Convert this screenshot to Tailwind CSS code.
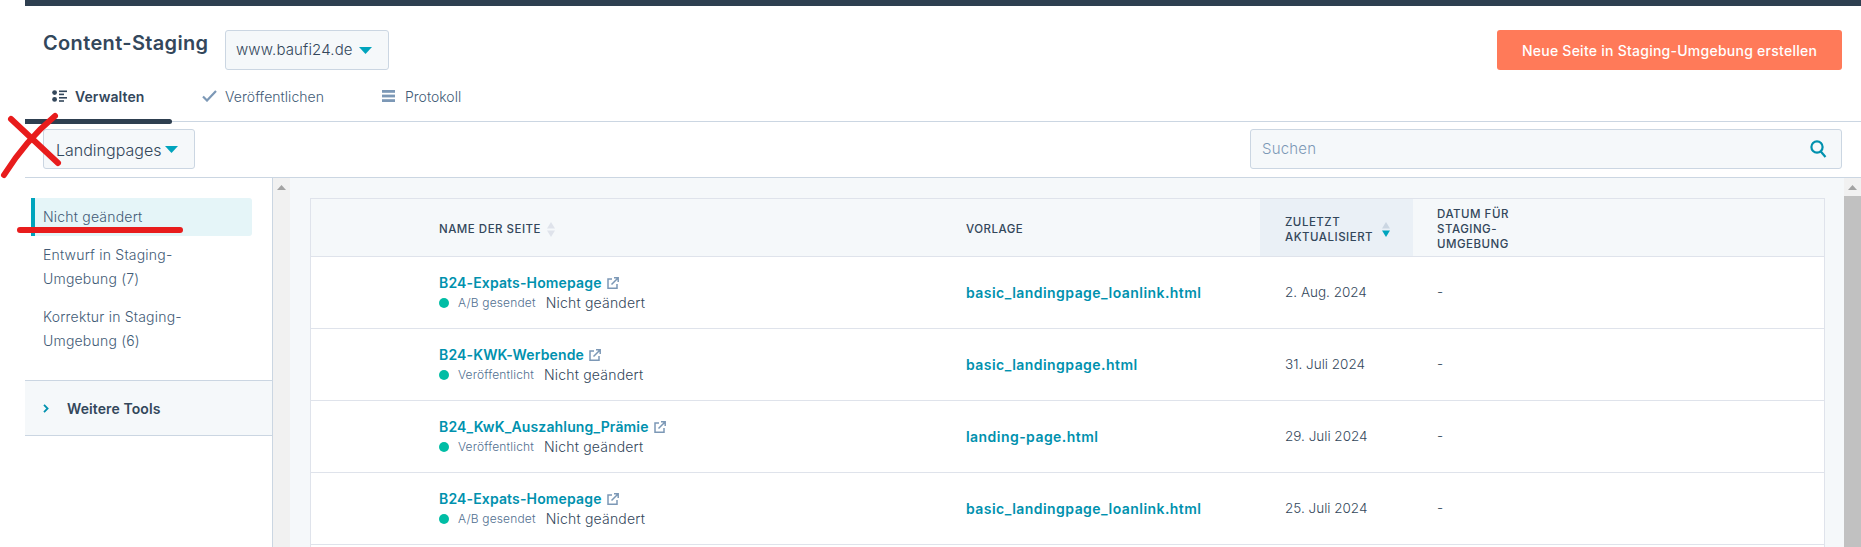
<!DOCTYPE html>
<html>
<head>
  <title>Content-Staging</title>
  <script src="https://cdn.jsdelivr.net/npm/@tailwindcss/browser@4"></script>
</head>
<body class="bg-white overflow-hidden font-['Inter',sans-serif] text-[#33475b]">
  <div class="relative h-[547px] w-[1861px] overflow-hidden">
    <div class="ml-[25px] h-[547px] flex flex-col">
      <div class="h-[6px] bg-[#2e3f50] shrink-0"></div>

      <!-- header -->
      <div class="h-[116px] shrink-0 relative border-b border-[#cbd6e2] pl-[18px] pr-[19px]">
        <div class="flex items-start pt-[24px]">
          <h1 class="text-[20px] leading-[26px] font-semibold tracking-[0.35px] w-[182px]">Content-Staging</h1>
          <button class="h-[40px] w-[164px] flex items-center pl-[10px] gap-[6px] bg-[#f5f8fa] border border-[#cbd6e2] rounded-[3px] text-[15px] font-light tracking-[0.15px]">
            www.baufi24.de
            <svg width="13" height="7" viewBox="0 0 13 7"><path d="M0 0h13L6.500 7z" fill="#00a4bd"/></svg>
          </button>
          <button class="ml-auto h-[40px] w-[345px] bg-[#ff7a59] rounded-[3px] text-white text-[14px] font-medium tracking-[0.25px]">Neue Seite in Staging-Umgebung erstellen</button>
        </div>
        <div class="flex items-center h-[20px] mt-[16px] text-[14px] font-light">
          <svg class="ml-[9px]" width="15" height="12" viewBox="0 0 15 12" fill="#33475b"><circle cx="2.600" cy="2.600" r="2.400"/><circle cx="2.600" cy="9.400" r="2.400"/><rect x="7" y="0.500" width="8" height="1.600"/><rect x="7" y="3.600" width="5" height="1.600"/><rect x="7" y="7" width="8" height="1.600"/><rect x="7" y="10.200" width="5" height="1.600"/></svg>
          <span class="ml-[8px] w-[127px] font-semibold tracking-[0.1px]">Verwalten</span>
          <svg width="15" height="12" viewBox="0 0 15 12"><path d="M1 6.500l4 4L14 1" fill="none" stroke="#7c98b6" stroke-width="2.200"/></svg>
          <span class="ml-[8px] w-[157px] text-[#425b76] tracking-[0.05px]">Veröffentlichen</span>
          <svg width="13" height="12" viewBox="0 0 13 12" fill="#7c98b6"><rect width="13" height="2.800"/><rect y="4.600" width="13" height="2.800"/><rect y="9.200" width="13" height="2.800"/></svg>
          <span class="ml-[10px] text-[#425b76]">Protokoll</span>
        </div>
        <div class="absolute left-0 bottom-[-3px] h-[5px] w-[147px] bg-[#2e3f50] rounded-r-[3px]"></div>
      </div>

      <!-- filter row -->
      <div class="h-[56px] shrink-0 flex items-start pt-[7px] pl-[18px] pr-[19px] border-b border-[#cbd6e2]">
        <button class="h-[40px] w-[152px] flex items-center pl-[12px] pt-px gap-[4px] bg-[#f5f8fa] border border-[#cbd6e2] rounded-[3px] text-[16px] font-light">
          Landingpages
          <svg width="13" height="7" viewBox="0 0 13 7"><path d="M0 0h13L6.500 7z" fill="#00a4bd"/></svg>
        </button>
        <div class="ml-auto h-[40px] w-[592px] flex items-center justify-between pl-[11px] pr-[14px] bg-[#f5f8fa] border border-[#cbd6e2] rounded-[3px]">
          <span class="text-[15px] pt-px font-light text-[#7c98b6] tracking-[0.2px]">Suchen</span>
          <svg width="17" height="18" viewBox="0 0 17 18" fill="none" stroke="#0091ae" stroke-width="2.200"><circle cx="7" cy="7" r="5.600"/><path d="M10.800 11.500l4.700 5.500"/></svg>
        </div>
      </div>

      <!-- body -->
      <div class="flex flex-1 min-h-0">
        <aside class="w-[248px] shrink-0 border-r border-[#cbd6e2] flex flex-col">
          <nav class="pt-[20px] pl-[6px] pr-[20px] text-[14px] leading-[24px] font-light text-[#425b76] tracking-[0.2px]">
            <div class="h-[38px] flex items-center pl-[8px] bg-[#e5f5f8] border-l-[4px] border-[#00a4bd] rounded-r-[3px]">Nicht geändert</div>
            <div class="pl-[12px] py-[7px]">Entwurf in Staging-<br>Umgebung (7)</div>
            <div class="pl-[12px] pt-[7px]">Korrektur in Staging-<br>Umgebung (6)</div>
          </nav>
          <div class="mt-[27px] h-[56px] flex items-center pl-[18px] bg-[#f5f8fa] border-y border-[#cbd6e2]">
            <svg width="6" height="9" viewBox="0 0 6 9" fill="none" stroke="#0091ae" stroke-width="1.800"><path d="M1 .8l3.600 3.700L1 8.200"/></svg>
            <span class="ml-[18px] text-[14px] font-semibold tracking-[0.1px]">Weitere Tools</span>
          </div>
        </aside>

        <div class="w-[17px] shrink-0 bg-[#f1f1f1] flex justify-center pt-[7px]">
          <svg width="9" height="5" viewBox="0 0 9 5"><path d="M0 5L4.500 0 9 5z" fill="#a3a3a3"/></svg>
        </div>

        <main class="flex-1 min-w-0 bg-[#f5f8fa] pt-[20px] pl-[20px] pr-[20px]">
          <div class="bg-white border-x border-t border-[#dfe3eb] h-full">
            <div class="grid grid-cols-[631px_318px_153px_1fr] h-[58px] bg-[#f5f8fa] border-b border-[#dfe3eb] text-[11.500px] leading-[15px] font-medium tracking-[0.5px] uppercase">
              <div class="pl-[128px] pt-[4px] flex items-center gap-[6px]">
                Name der Seite
                <svg width="8" height="15" viewBox="0 0 8 15" fill="#dfe3eb"><path d="M0 6.500L4 0l4 6.500zM0 8.500h8L4 15z"/></svg>
              </div>
              <div class="pl-[24px] pt-[4px] flex items-center">Vorlage</div>
              <div class="pl-[25px] pt-[4px] flex items-center gap-[3px] bg-[#eaf0f6]">
                <span class="w-[94px]">Zuletzt Aktualisiert</span>
                <svg width="8" height="15" viewBox="0 0 8 15"><path d="M0 6.500L4 0l4 6.500z" fill="#cbd6e2"/><path d="M0 8.500h8L4 15z" fill="#00a4bd"/></svg>
              </div>
              <div class="pl-[24px] pt-[4px] flex items-center"><span class="w-[90px]">Datum für Staging-Umgebung</span></div>
            </div>
            <div id="rows"></div>
          </div>
        </main>

        <div class="w-[17px] shrink-0 bg-[#f1f1f1] flex flex-col items-center pt-[7px] -ml-[1px]">
          <svg width="9" height="5" viewBox="0 0 9 5"><path d="M0 5L4.500 0 9 5z" fill="#a3a3a3"/></svg>
          <div class="mt-[6px] w-full flex-1 bg-[#c1c1c1]"></div>
        </div>
      </div>
    </div>

    <!-- red pen marks drawn over the screenshot -->
    <svg class="absolute left-0 top-0 pointer-events-none" width="200" height="240" viewBox="0 0 200 240" fill="none" stroke="#e81c1c" stroke-width="6" stroke-linecap="round">
      <path d="M11 119L58 163"/>
      <path d="M55 116Q26 140 4 175"/>
      <path d="M20 230H180"/>
    </svg>
  </div>

  <script>
    const pages = [
      { name: 'B24-Expats-Homepage', status: 'A/B gesendet', template: 'basic_landingpage_loanlink.html', date: '2. Aug. 2024' },
      { name: 'B24-KWK-Werbende', status: 'Veröffentlicht', template: 'basic_landingpage.html', date: '31. Juli 2024' },
      { name: 'B24_KwK_Auszahlung_Prämie', status: 'Veröffentlicht', template: 'landing-page.html', date: '29. Juli 2024' },
      { name: 'B24-Expats-Homepage', status: 'A/B gesendet', template: 'basic_landingpage_loanlink.html', date: '25. Juli 2024' }
    ];

    document.getElementById('rows').innerHTML = pages.map(page => `
      <div class="grid grid-cols-[631px_318px_153px_1fr] h-[72px] border-b border-[#dfe3eb] items-center text-[13.500px]">
        <div class="pl-[128px]">
          <div class="flex items-center gap-[5px] text-[14px] leading-[20px] font-semibold tracking-[0.15px] text-[#0091ae]">
            ${page.name}
            <svg width="12" height="12" viewBox="0 0 12 12" fill="none" stroke="#7c98b6" stroke-width="1.500"><path d="M5 2H1v9.200h9V7"/><path d="M4.500 7.500L11 1M7 .8h4.200V5"/></svg>
          </div>
          <div class="flex items-center leading-[18px] mt-px">
            <span class="w-[10px] h-[10px] rounded-full bg-[#00bda5]"></span>
            <span class="ml-[9px] text-[12px] font-light tracking-[0.15px] text-[#516f90]">${page.status}</span>
            <span class="ml-[10px] text-[14px] font-light text-[#33475b] tracking-[0.2px]">Nicht geändert</span>
          </div>
        </div>
        <div class="pl-[24px] text-[14px] font-semibold tracking-[0.45px] text-[#0091ae]">${page.template}</div>
        <div class="pl-[25px] font-light">${page.date}</div>
        <div class="pl-[24px] font-light">-</div>
      </div>
    `).join('');
  </script>
</body>
</html>
